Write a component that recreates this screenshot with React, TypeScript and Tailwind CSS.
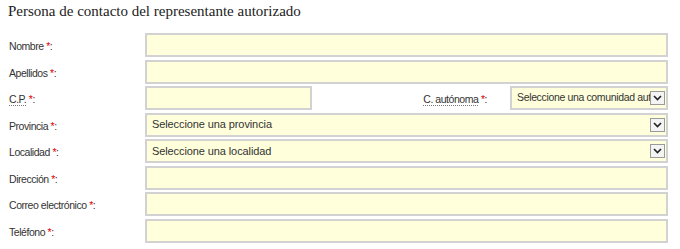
import type { ReactNode } from "react";

const field = "h-6 border-2 border-[#d2d2d2] bg-[#ffffdc]";

function Req() {
  return <span className="text-[#e00000]">*</span>;
}

function Label({ children, abbr }: { children: ReactNode; abbr?: boolean }) {
  return (
    <span className="whitespace-nowrap text-[10.5px] tracking-[-0.45px] text-[#333]">
      {abbr ? (
        <span className="border-b border-dotted border-[#777]">{children}</span>
      ) : (
        children
      )}{" "}
      <Req />:
    </span>
  );
}

function Chevron() {
  return (
    <span className="flex h-[14px] w-[15px] shrink-0 items-center justify-center border border-[#9a9a9a] bg-[#f4f4f4]">
      <svg width="9" height="6" viewBox="0 0 9 6">
        <path d="M1 1l3.5 3.5L8 1" fill="none" stroke="#222" strokeWidth="1.6" />
      </svg>
    </span>
  );
}

function Select({
  text,
  className = "",
  textClass = "text-[11px] tracking-[-0.1px]",
}: {
  text: string;
  className?: string;
  textClass?: string;
}) {
  return (
    <div className={`${field} flex items-center overflow-hidden pl-[5px] pr-px ${className}`}>
      <span className={`min-w-0 flex-1 overflow-hidden whitespace-nowrap text-[#333] ${textClass}`}>{text}</span>
      <Chevron />
    </div>
  );
}

function Row({ label, children }: { label: ReactNode; children: ReactNode }) {
  return (
    <div className="flex h-6 items-center">
      <div className="w-[136px] shrink-0">{label}</div>
      <div className="flex flex-1 items-center">{children}</div>
    </div>
  );
}

export default function App() {
  return (
    <div className="h-[249px] w-[680px] bg-white pl-[9px] pr-[12px]" style={{ fontFamily: "Arial, 'Liberation Sans', sans-serif" }}>
      <h2
        className="-ml-px pt-[2px] text-[15px] leading-[18px] text-[#222]"
        style={{ fontFamily: "'Liberation Serif', 'Times New Roman', serif" }}
      >
        Persona de contacto del representante autorizado
      </h2>

      <div className="mt-[13px] flex flex-col gap-[2.5px]">
        <Row label={<Label>Nombre</Label>}>
          <div className={`${field} w-full`} />
        </Row>
        <Row label={<Label>Apellidos</Label>}>
          <div className={`${field} w-full`} />
        </Row>
        <Row label={<Label abbr>C.P.</Label>}>
          <div className={`${field} w-[167px]`} />
          <div className="ml-auto mr-[23px] text-right">
            <Label abbr>C. autónoma</Label>
          </div>
          <Select
            text="Seleccione una comunidad autónoma"
            className="w-[158px] shrink-0"
            textClass="text-[10.5px] tracking-[-0.35px]"
          />
        </Row>
        <Row label={<Label>Provincia</Label>}>
          <Select text="Seleccione una provincia" className="w-full" />
        </Row>
        <Row label={<Label>Localidad</Label>}>
          <Select text="Seleccione una localidad" className="w-full" />
        </Row>
        <Row label={<Label>Dirección</Label>}>
          <div className={`${field} w-full`} />
        </Row>
        <Row label={<Label>Correo electrónico</Label>}>
          <div className={`${field} w-full`} />
        </Row>
        <Row label={<Label>Teléfono</Label>}>
          <div className={`${field} w-full`} />
        </Row>
      </div>
    </div>
  );
}
